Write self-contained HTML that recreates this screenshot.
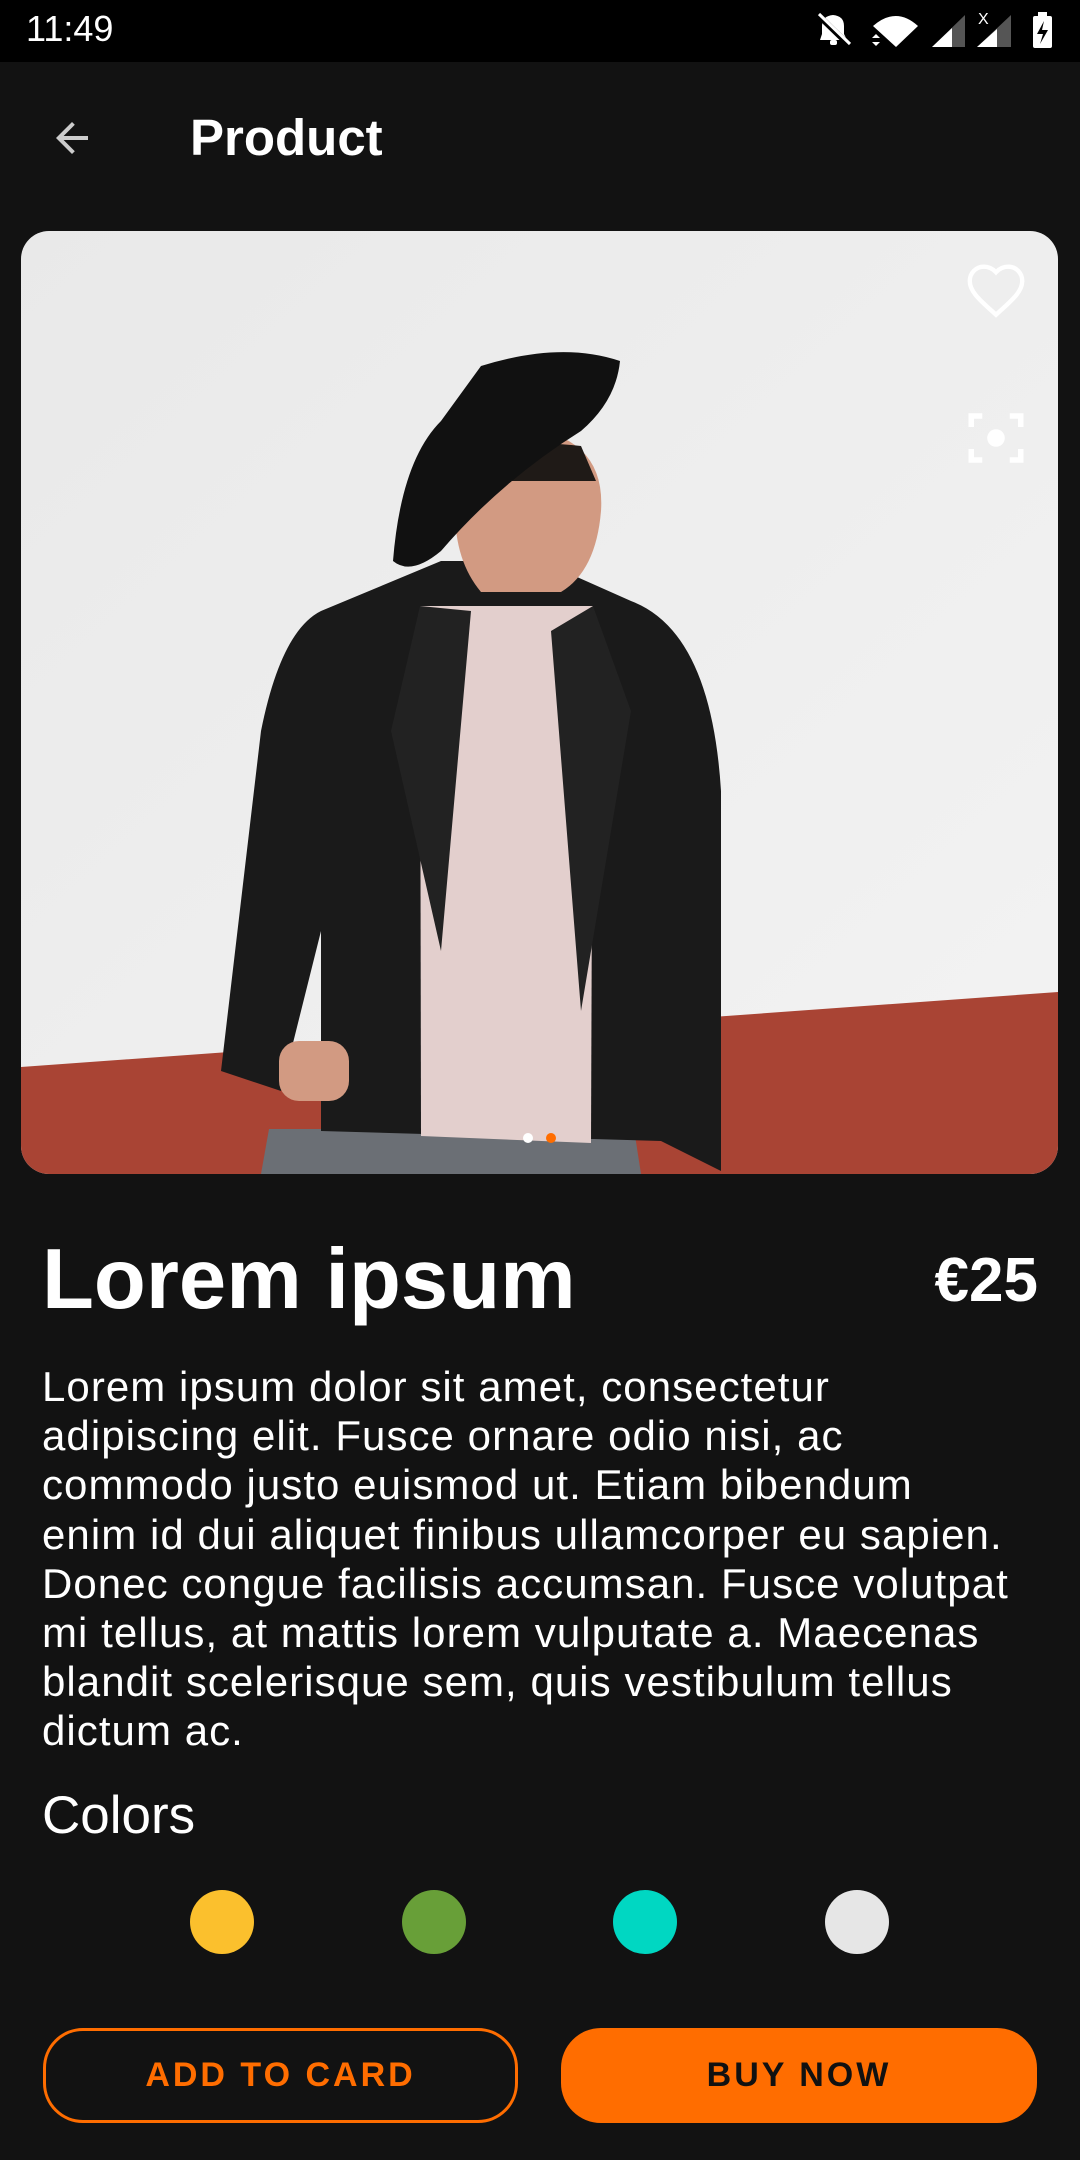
<!DOCTYPE html>
<html><head><meta charset="utf-8"><style>
*{margin:0;padding:0;box-sizing:border-box}
body{width:1080px;height:2160px;background:#121212;font-family:"Liberation Sans",sans-serif;color:#fff;position:relative;overflow:hidden}
.sb{position:absolute;left:0;top:0;width:1080px;height:62px;background:#000}
.abs{position:absolute}
</style></head><body>
<div class="sb">
<div class="abs" style="left:26px;top:8px;font-size:36px;color:#fff">11:49</div>
<svg class="abs" style="left:800px;top:0" width="280" height="62" viewBox="0 0 280 62">
<path d="M20 40 L22 34 L22 26 Q22 16 33 15 Q44 16 44 26 L44 34 L47 40 Z" fill="#fff"/><rect x="30" y="40" width="7" height="5" rx="2" fill="#fff"/><path d="M17 14 L50 46" stroke="#000" stroke-width="6"/><path d="M19 14 L50 44" stroke="#fff" stroke-width="3"/>
<path d="M73 26 Q96 6 118 26 L96 47 Z" fill="#fff"/>
<path d="M72 38 l4 -4 l4 4Z M72 42 l4 4 l4 -4Z" fill="#fff"/>
<path d="M132 47 L165 15 L165 47 Z" fill="#555"/><path d="M132 47 L152 28 L152 47 Z" fill="#fff"/>
<path d="M177 47 L211 15 L211 47 Z" fill="#555"/><path d="M177 47 L197 29 L197 47 Z" fill="#fff"/>
<text x="178" y="24" font-size="16" fill="#fff" font-family="Liberation Sans">X</text>
<rect x="233" y="16" width="19" height="32" rx="2" fill="#fff"/><rect x="238" y="12" width="9" height="5" fill="#fff"/><path d="M244 21 L237 34 L243 34 L240 44 L248 30 L242 30 Z" fill="#000"/>
</svg>
</div>
<svg class="abs" style="left:48px;top:114px" width="48" height="48" viewBox="0 0 24 24"><path d="M20 11H7.8l5.6-5.6L12 4l-8 8 8 8 1.4-1.4L7.8 13H20z" fill="#ccc"/></svg>
<div class="abs" style="left:190px;top:108px;font-size:51px;font-weight:bold">Product</div>

<div class="abs" style="left:21px;top:231px;width:1037px;height:943px;border-radius:28px;overflow:hidden">
<svg width="1037" height="943" viewBox="0 0 1037 943">
<defs><linearGradient id="w" x1="0" y1="0" x2="1" y2="1"><stop offset="0" stop-color="#e9e9e9"/><stop offset="1" stop-color="#f3f3f3"/></linearGradient></defs>
<rect width="1037" height="943" fill="url(#w)"/>
<path d="M0 836 L1037 761 L1037 943 L0 943Z" fill="#a94434"/>
<path d="M248 898 L613 898 L620 943 L240 943Z" fill="#6b6f75"/>
<path d="M300 380 Q260 400 240 500 L200 840 L260 860 L300 700 L300 900 L640 910 L700 940 L700 560 Q690 400 610 370 L520 330 L420 330Z" fill="#1a1a1a"/>
<path d="M399 375 L572 375 L570 912 L400 905 Z" fill="#e3cfcd"/>
<path d="M399 375 L370 500 L420 720 L450 380Z M572 375 L610 480 L560 780 L530 400Z" fill="#222"/>
<path d="M434 220 Q440 196 500 196 Q585 205 580 280 Q575 340 540 361 L460 361 Q434 330 434 280Z" fill="#d29a82"/>
<path d="M440 240 Q470 205 560 215 L575 250 L470 250Z" fill="#1f1a17"/>
<path d="M372 330 Q380 230 420 190 L460 135 Q540 110 599 130 Q595 170 560 200 Q480 250 420 320 Q390 345 372 330Z" fill="#111"/>
<rect x="258" y="810" width="70" height="60" rx="20" fill="#d29a82"/>
<circle cx="507" cy="907" r="5" fill="#fff"/><circle cx="530" cy="907" r="5" fill="#ff6d00"/>
</svg>
<svg class="abs" style="left:940px;top:24px" width="70" height="70" viewBox="0 0 24 24"><path d="M12 20.5l-1.3-1.2C6 15.1 3 12.3 3 8.9 3 6.2 5.1 4 7.8 4c1.6 0 3.1.7 4.2 1.9C13.1 4.7 14.6 4 16.2 4 18.9 4 21 6.2 21 8.9c0 3.4-3 6.2-7.7 10.4z" fill="none" stroke="#fff" stroke-width="1.5"/></svg>
<svg class="abs" style="left:942px;top:174px" width="66" height="66" viewBox="0 0 24 24"><path d="M3 8V4h4M17 4h4v4M21 16v4h-4M7 20H3v-4" fill="none" stroke="#fff" stroke-width="2"/><circle cx="12" cy="12" r="3.2" fill="#fff"/></svg>
</div>

<div class="abs" style="left:42px;top:1230px;font-size:85px;font-weight:bold;line-height:100px">Lorem ipsum</div>
<div class="abs" style="right:42px;top:1246px;font-size:62px;font-weight:bold;line-height:70px">€25</div>
<div class="abs" style="left:42px;top:1362px;white-space:nowrap;font-size:42px;letter-spacing:1.05px;line-height:49.2px">Lorem ipsum dolor sit amet, consectetur<br>adipiscing elit. Fusce ornare odio nisi, ac<br>commodo justo euismod ut. Etiam bibendum<br>enim id dui aliquet finibus ullamcorper eu sapien.<br>Donec congue facilisis accumsan. Fusce volutpat<br>mi tellus, at mattis lorem vulputate a. Maecenas<br>blandit scelerisque sem, quis vestibulum tellus<br>dictum ac.</div>
<div class="abs" style="left:42px;top:1786px;font-size:53px;line-height:60px">Colors</div>
<div class="abs" style="left:190px;top:1890px;width:64px;height:64px;border-radius:50%;background:#fbc02d"></div>
<div class="abs" style="left:402px;top:1890px;width:64px;height:64px;border-radius:50%;background:#689f38"></div>
<div class="abs" style="left:613px;top:1890px;width:64px;height:64px;border-radius:50%;background:#00d7c2"></div>
<div class="abs" style="left:825px;top:1890px;width:64px;height:64px;border-radius:50%;background:#e6e6e6"></div>
<div class="abs" style="left:43px;top:2028px;width:475px;height:95px;border:3px solid #ff6d00;border-radius:40px;color:#ff6d00;font-size:34px;letter-spacing:3px;display:flex;align-items:center;justify-content:center;font-weight:bold">ADD TO CARD</div>
<div class="abs" style="left:561px;top:2028px;width:476px;height:95px;background:#ff6d00;border-radius:40px;color:#111;font-size:34px;letter-spacing:3px;display:flex;align-items:center;justify-content:center;font-weight:bold">BUY NOW</div>
</body></html>
